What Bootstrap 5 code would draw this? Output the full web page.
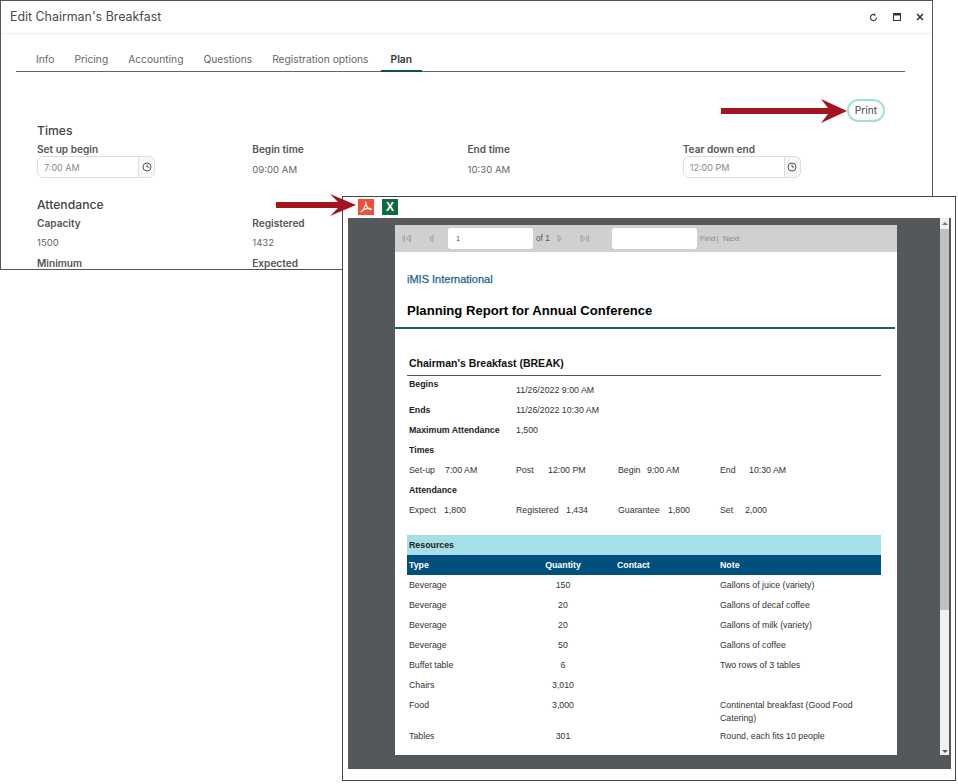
<!DOCTYPE html>
<html lang="en">
<head>
<meta charset="utf-8">
<title>Edit Chairman's Breakfast</title>
<link href="https://cdn.jsdelivr.net/npm/bootstrap@5.3.0/dist/css/bootstrap.min.css" rel="stylesheet">
<style>
html,body{margin:0;height:784px;overflow:hidden;background:#fff}
body{font-family:Inter,"Liberation Sans",sans-serif;color:#555;position:relative}
.edit-win{position:absolute;left:0;top:0;width:933px;height:270px;border:1px solid #555;overflow:hidden;background:#fff}
.win-head{height:33px;border-bottom:1px solid #eee;padding:0 0 0 9px}
.win-title{font-size:12.4px;color:#4a4a4a}
.win-ic{width:23.500px;display:flex;justify-content:center}
.tabbar{margin:14px 27px 0 15px;border-bottom:1px solid #666;padding-left:10px;height:24px}
.tab-it{font-size:10.25px;color:#666;padding:0 10px;height:24px;line-height:22px;white-space:nowrap}
.tab-it.on{color:#333;font-weight:600;border-bottom:2px solid #0d4f5c;margin-left:2px}
.print-line{height:24px;margin-top:27px;padding-right:47px}
.print-btn{font-size:10.2px;color:#444;border:2px solid #9fe3cc;border-radius:12px;height:23px;width:38px;padding:0;line-height:19px;background:#fff}
.edit-body{padding:0 35px 0 36px}
.sec-h{font-size:12.2px;color:#444;font-weight:500;line-height:16px}
.f-lab{font-size:10.1px;font-weight:600;color:#555;line-height:14px}
.f-val{font-size:9.600px;color:#666;line-height:14px;margin-top:7px}
.f-val.tight{margin-top:6px}
.f-row{width:861px;margin:0;--bs-gutter-x:0}
.gap-top{margin-top:3px}
.gap-sec{margin-top:19px}
.gap-row{margin-top:6px}
.t-grp{width:118px;height:22px;margin-top:0}
.t-grp .form-control{font-size:9px;padding:0 6px;color:#888;border-color:#ddd;height:22px;min-height:0;box-shadow:none}
.t-grp .input-group-text{padding:0;width:17px;justify-content:center;background:#f8f8f8;border-color:#ddd}
.arrow-ov{position:absolute;z-index:5}
.arrow-a{left:721px;top:98px}
.arrow-b{left:276px;top:192px}
.rep-win{position:absolute;left:342px;top:196px;width:614px;height:585px;border:1px solid #444;background:#fff;z-index:3;overflow:hidden}
.exp-bar{height:21px;padding:2px 0 0 15px;gap:8px;align-items:flex-start}
.exp-ic{width:16px;height:16px;display:flex;align-items:center;justify-content:center}
.exp-pdf{background:#ef4f3b}
.exp-xls{background:#0f6b3e;color:#fff;font:700 12px "Liberation Sans",sans-serif}
.rep-stage{margin-left:5px;width:603px;height:551px;background:#54585a;padding:7px 0 0 47px;position:relative;font-family:"Liberation Sans",Arial,sans-serif}
.rep-page{width:502px;height:530px;background:#fff;overflow:hidden}
.rep-tools{height:27px;background:#d0d0d0;position:relative}
.tool-in{background:#fff;border-radius:3px;height:21px;position:absolute;top:3px}
.tool-num{left:53px;width:85px;padding-left:8px;line-height:21px;font-size:7.500px;color:#555}
.tool-find{left:217px;width:85px}
.tool-t{position:absolute;top:8px;line-height:11px;font-size:8px;color:#888}
.tool-t.dk{color:#555;font-size:8.300px}
.tool-svg{position:absolute;top:9px}
.org{color:#1b6288;font-size:11px;margin:20px 0 0 12px;line-height:14px;-webkit-text-stroke:.25px #1b6288}
.rep-h{font-size:13.1px;font-weight:700;color:#000;margin:16px 0 0 12px;line-height:18px}
.rep-rule{height:2px;background:#1f5d7c;width:500px;margin-top:7px}
.sub-h{font-size:10.5px;font-weight:700;color:#111;margin:27px 0 0 14px;line-height:14px}
.sub-rule{height:1px;background:#555;width:474px;margin:5px 0 0 12px}
.rep-body{margin-left:14px;font-size:8.800px;color:#333}
.kv{height:20px;display:flex;align-items:center}
.kv b{color:#222;width:107px;flex:none}
.kv-first{margin-top:5px}
.kv b.lab-up{align-self:flex-start;margin-top:-3px}
.g4{display:grid;grid-template-columns:107px 102px 102px 1fr;height:20px;align-items:center;white-space:nowrap}
.g4 i{font-style:normal;display:inline-block}
.w36{width:36px}.w32{width:32px}.w35{width:35px}.w50{width:50px}.w25{width:25px}.w29{width:29px}
.res-band{margin:14px 0 0 12px;width:474px;height:20px;background:#a5e0e9;font-size:8.800px;font-weight:700;color:#222;line-height:21px;padding-left:2px}
.res-t{width:474px;margin:0 0 0 12px;font-size:8.800px;color:#333;table-layout:fixed;border-collapse:collapse;--bs-table-bg:transparent}
.res-t th{background:#004f7c;color:#fff;height:20px;padding:2px 2px 0;font-weight:700;border:0;vertical-align:middle}
.res-t td{padding:4px 2px 1px;height:20px;vertical-align:top;line-height:13px;border:0;color:#333}
.c-a{width:104px}.c-b{width:104px}.c-c{width:103px}.c-d{width:163px}
.sbar{position:absolute;left:592px;top:0;width:9px;height:537px;background:#f1f1f1;display:flex;flex-direction:column;align-items:center}
.sb-thumb{width:9px;height:381px;background:#c1c1c1;margin-top:4px}
.sb-up{width:0;height:0;border:3px solid transparent;border-bottom:3px solid #777;margin-top:1px}
.sb-dn{width:0;height:0;border:3px solid transparent;border-top:3px solid #555;margin-top:auto;margin-bottom:-1px}
</style>
</head>
<body>
<div class="edit-win">
  <div class="win-head d-flex align-items-center justify-content-between">
    <span class="win-title">Edit Chairman's Breakfast</span>
    <div class="d-flex align-items-center">
      <span class="win-ic"><svg width="9" height="9" viewBox="0 0 10 10" fill="none" stroke="#444" stroke-width="1.3"><path d="M8.400 5A3.400 3.400 0 1 1 6.600 2"/><path d="M5.600 .2 7.800 2.100 5.400 3.500" fill="#444" stroke="none"/></svg></span>
      <span class="win-ic"><svg width="8" height="8" viewBox="0 0 8 8" fill="none" stroke="#333"><rect x=".5" y=".5" width="7" height="7"/><path d="M0 1.500h8" stroke-width="2"/></svg></span>
      <span class="win-ic"><svg width="8" height="8" viewBox="0 0 8 8" stroke="#333" stroke-width="1.6"><path d="M1 1l6 6M7 1l-6 6"/></svg></span>
    </div>
  </div>
  <div class="tabbar d-flex">
    <div class="tab-it">Info</div><div class="tab-it">Pricing</div><div class="tab-it">Accounting</div><div class="tab-it">Questions</div><div class="tab-it">Registration options</div><div class="tab-it on">Plan</div>
  </div>
  <div class="print-line d-flex justify-content-end align-items-start"><button class="btn print-btn" type="button">Print</button></div>
  <div class="edit-body">
    <div class="sec-h">Times</div>
    <div class="row f-row gap-top">
      <div class="col-3"><div class="f-lab">Set up begin</div><div class="input-group t-grp"><input class="form-control" value="7:00 AM"><span class="input-group-text"><svg width="10" height="10" viewBox="0 0 10 10" fill="none" stroke="#555"><circle cx="5" cy="5" r="4"/><path d="M5 2.600V5h2.200"/></svg></span></div></div>
      <div class="col-3"><div class="f-lab">Begin time</div><div class="f-val">09:00 AM</div></div>
      <div class="col-3"><div class="f-lab">End time</div><div class="f-val">10:30 AM</div></div>
      <div class="col-3"><div class="f-lab">Tear down end</div><div class="input-group t-grp"><input class="form-control" value="12:00 PM"><span class="input-group-text"><svg width="10" height="10" viewBox="0 0 10 10" fill="none" stroke="#555"><circle cx="5" cy="5" r="4"/><path d="M5 2.600V5h2.200"/></svg></span></div></div>
    </div>
    <div class="sec-h gap-sec">Attendance</div>
    <div class="row f-row gap-top">
      <div class="col-3"><div class="f-lab">Capacity</div><div class="f-val tight">1500</div></div>
      <div class="col-3"><div class="f-lab">Registered</div><div class="f-val tight">1432</div></div>
    </div>
    <div class="row f-row gap-row">
      <div class="col-3"><div class="f-lab">Minimum</div></div>
      <div class="col-3"><div class="f-lab">Expected</div></div>
    </div>
  </div>
</div>

<svg class="arrow-ov arrow-a" width="127" height="26" viewBox="0 0 127 26"><path d="M0 10h107L100 1l26 12-26 12 7-9H0z" fill="#a3141f"/></svg>
<svg class="arrow-ov arrow-b" width="82" height="26" viewBox="0 0 82 26"><path d="M0 10h62L54 2l26 11-26 11 8-8H0z" fill="#a3141f"/></svg>

<div class="rep-win">
  <div class="exp-bar d-flex">
    <span class="exp-ic exp-pdf"><svg width="16" height="16" viewBox="0 0 16 16" fill="none" stroke="#fff" stroke-width="1.200"><path d="M7.800 2.800c-.5 1.200.3 3.200 1.100 4.700.8 1.500 2.100 2.900 3.600 3.100.9.100 1-.8 0-1-1.600-.3-4.200 0-6.600 1-1.500.7-2.500 1.700-2.900 2.600"/><path d="M7.800 5.500 5.400 10.500"/></svg></span>
    <span class="exp-ic exp-xls">X</span>
  </div>
  <div class="rep-stage">
    <div class="rep-page">
      <div class="rep-tools">
        <svg class="tool-svg" style="left:7px" width="10" height="9" viewBox="0 0 10 9" fill="#c0c0c0" stroke="#a8a8a8"><path d="M1 1v7M2.500 1v7M8.500 1 4 4.500 8.500 8z"/></svg>
        <svg class="tool-svg" style="left:33px" width="6" height="9" viewBox="0 0 6 9" fill="#c0c0c0" stroke="#a8a8a8"><path d="M5 1 1 4.500 5 8z"/></svg>
        <div class="tool-in tool-num">1</div>
        <span class="tool-t dk" style="left:141px">of 1</span>
        <svg class="tool-svg" style="left:162px" width="6" height="9" viewBox="0 0 6 9" fill="#c0c0c0" stroke="#a8a8a8"><path d="M1 1l4 3.500L1 8z"/></svg>
        <svg class="tool-svg" style="left:185px" width="10" height="9" viewBox="0 0 10 9" fill="#c0c0c0" stroke="#a8a8a8"><path d="M1 1l4.500 3.500L1 8zM7 1v7M8.500 1v7"/></svg>
        <div class="tool-in tool-find"></div>
        <span class="tool-t" style="left:305px">Find</span>
        <span class="tool-t" style="left:321.500px">|</span>
        <span class="tool-t" style="left:328px">Next</span>
      </div>
      <div class="org">iMIS International</div>
      <div class="rep-h">Planning Report for Annual Conference</div>
      <div class="rep-rule"></div>
      <div class="sub-h">Chairman's Breakfast (BREAK)</div>
      <div class="sub-rule"></div>
      <div class="rep-body">
        <div class="kv kv-first"><b class="lab-up">Begins</b><span>11/26/2022 9:00 AM</span></div>
        <div class="kv"><b>Ends</b><span>11/26/2022 10:30 AM</span></div>
        <div class="kv"><b>Maximum Attendance</b><span>1,500</span></div>
        <div class="kv"><b>Times</b></div>
        <div class="g4"><span><i class="w36">Set-up</i>7:00 AM</span><span><i class="w32">Post</i>12:00 PM</span><span><i class="w29">Begin</i>9:00 AM</span><span><i class="w29">End</i>10:30 AM</span></div>
        <div class="kv"><b>Attendance</b></div>
        <div class="g4"><span><i class="w35">Expect</i>1,800</span><span><i class="w50">Registered</i>1,434</span><span><i class="w50">Guarantee</i>1,800</span><span><i class="w25">Set</i>2,000</span></div>
      </div>
      <div class="res-band">Resources</div>
      <table class="table res-t mb-0">
        <colgroup><col class="c-a"><col class="c-b"><col class="c-c"><col class="c-d"></colgroup>
        <thead><tr><th>Type</th><th class="text-center">Quantity</th><th>Contact</th><th>Note</th></tr></thead>
        <tbody>
          <tr><td>Beverage</td><td class="text-center">150</td><td></td><td>Gallons of juice (variety)</td></tr>
          <tr><td>Beverage</td><td class="text-center">20</td><td></td><td>Gallons of decaf coffee</td></tr>
          <tr><td>Beverage</td><td class="text-center">20</td><td></td><td>Gallons of milk (variety)</td></tr>
          <tr><td>Beverage</td><td class="text-center">50</td><td></td><td>Gallons of coffee</td></tr>
          <tr><td>Buffet table</td><td class="text-center">6</td><td></td><td>Two rows of 3 tables</td></tr>
          <tr><td>Chairs</td><td class="text-center">3,010</td><td></td><td></td></tr>
          <tr><td>Food</td><td class="text-center">3,000</td><td></td><td>Continental breakfast (Good Food Catering)</td></tr>
          <tr><td>Tables</td><td class="text-center">301</td><td></td><td>Round, each fits 10 people</td></tr>
        </tbody>
      </table>
    </div>
    <div class="sbar"><span class="sb-up"></span><div class="sb-thumb"></div><span class="sb-dn"></span></div>
  </div>
</div>
<script src="https://cdn.jsdelivr.net/npm/bootstrap@5.3.0/dist/js/bootstrap.bundle.min.js"></script>
</body>
</html>
